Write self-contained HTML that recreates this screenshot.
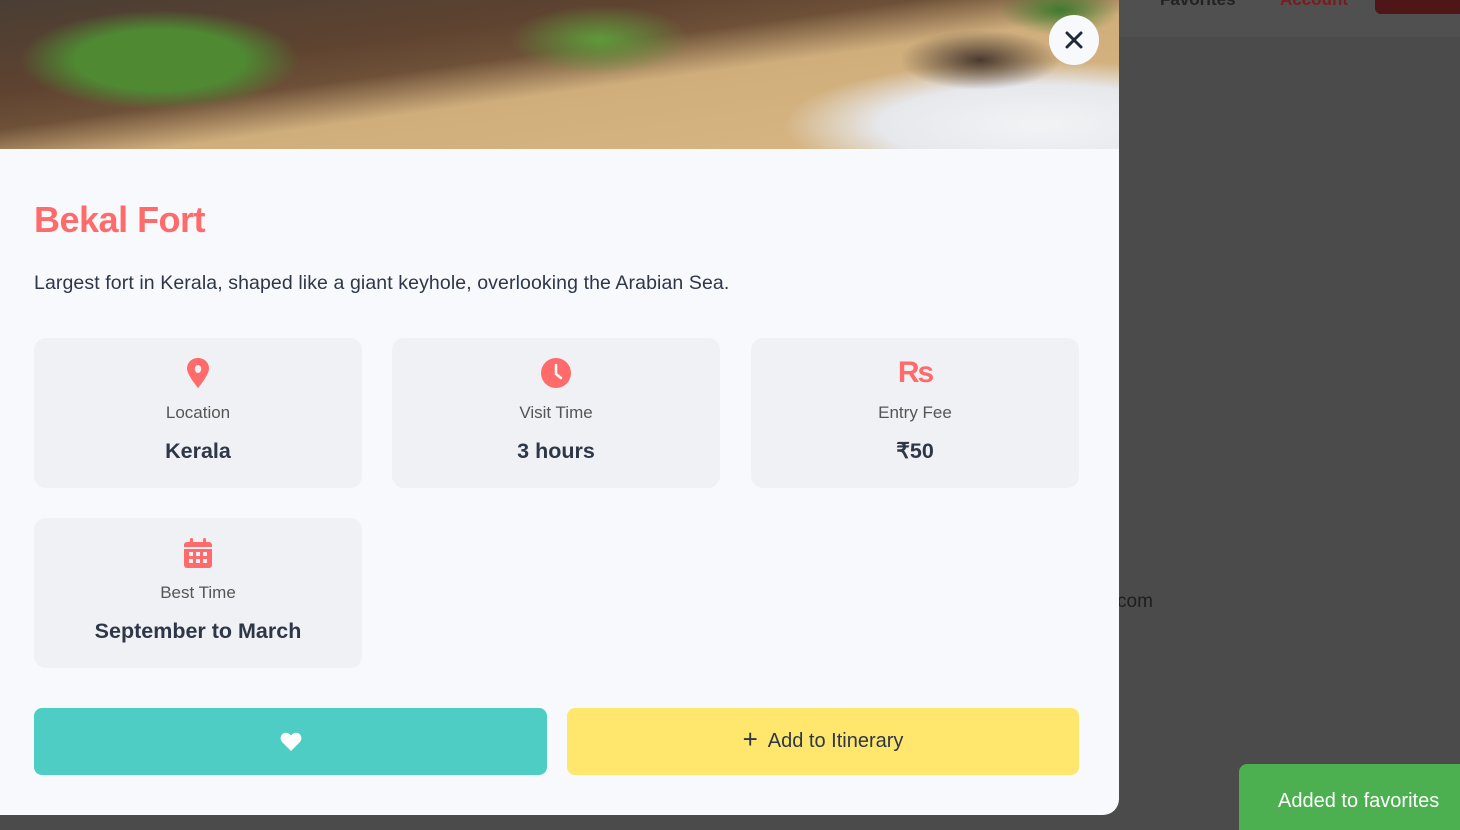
<!DOCTYPE html>
<html><head><meta charset="utf-8"><style>
*{margin:0;padding:0;box-sizing:border-box}
body{width:1460px;height:830px;overflow:hidden;background:#4b4b4b;font-family:"Liberation Sans",sans-serif;position:relative}
.hdr{position:absolute;left:0;top:0;width:1460px;height:37px;background:#505050}
.redbtn{position:absolute;left:1375px;top:-10px;width:100px;height:24px;background:#4e1616;border-radius:6px}
.hlink{position:absolute;top:-10px;font-size:17px;font-weight:bold}
.com{position:absolute;left:1117px;top:591px;font-size:19px;color:#1e1e1e}
.modal{position:absolute;left:0;top:0;width:1119px;height:815px;background:#f8f9fc;border-radius:0 0 16px 0;overflow:hidden}
.img{position:absolute;left:0;top:0;width:1119px;height:149px;
background:
radial-gradient(ellipse 140px 50px at 160px 60px,#4f8a33 0,#4f8a33 60%,transparent 100%),
radial-gradient(ellipse 90px 35px at 600px 40px,#5e9a3a 0,transparent 100%),
radial-gradient(ellipse 60px 25px at 1060px 10px,#3f7a2e 0,transparent 100%),
radial-gradient(ellipse 80px 30px at 980px 60px,#4a3a30 0,transparent 100%),
radial-gradient(ellipse 320px 80px at 1040px 125px,#f2f3f5 0,#e6e8ec 50%,transparent 80%),
linear-gradient(172deg,#4a3e34 0,#5e4330 30%,#6e5038 42%,#cfae7c 56%,#d9b885 100%)}
.close{position:absolute;left:1049px;top:15px;width:50px;height:50px;border-radius:50%;background:#f8f9fc;display:flex;align-items:center;justify-content:center}
h1{position:absolute;left:34px;top:199px;font-size:36px;color:#ff6b6b;font-weight:bold;letter-spacing:-0.5px}
.desc{position:absolute;left:34px;top:272px;font-size:19.5px;color:#2d3748;letter-spacing:0.1px}
.card{position:absolute;width:328px;height:150px;background:#f0f1f4;border-radius:12px;text-align:center}
.card svg{position:absolute;left:50%;transform:translateX(-50%)}
.lbl{position:absolute;left:0;right:0;top:65px;font-size:17px;color:#555}
.val{position:absolute;left:0;right:0;top:101px;font-size:21.5px;font-weight:bold;color:#2d3748}
.btn{position:absolute;top:708px;height:67px;border-radius:8px;display:flex;align-items:center;justify-content:center}
.toast{position:absolute;left:1239px;top:764px;width:221px;height:66px;background:#4caf50;border-radius:8px 0 0 0;color:#fff;font-size:20px;padding:26px 0 0 39px}
</style></head><body>
<div class="hdr"></div>
<div class="hlink" style="left:1160px;color:#222">Favorites</div>
<div class="hlink" style="left:1280px;color:#7a1c1c">Account</div>
<div class="redbtn"></div>
<div class="com">com</div>
<div class="modal">
<div class="img"></div>
<div class="close"><svg width="18" height="18" viewBox="0 0 18 18"><path d="M2 2L16 16M16 2L2 16" stroke="#1f2937" stroke-width="3" stroke-linecap="round"/></svg></div>
<h1>Bekal Fort</h1>
<div class="desc">Largest fort in Kerala, shaped like a giant keyhole, overlooking the Arabian Sea.</div>
<div class="card" style="left:34px;top:338px"><svg style="top:20px" width="24" height="30" viewBox="0 0 24 30"><path d="M12 0C5.5 0 1 4.8 1 10.5C1 17 12 30 12 30S23 17 23 10.5C23 4.8 18.5 0 12 0Z" fill="#ff6b6b"/><ellipse cx="12" cy="11" rx="3.2" ry="4" fill="#f0f1f4"/></svg><div class="lbl">Location</div><div class="val">Kerala</div></div>
<div class="card" style="left:392px;top:338px"><svg style="top:19px" width="32" height="32" viewBox="0 0 32 32"><circle cx="16" cy="16" r="15" fill="#ff6b6b"/><path d="M16 8V17L21 21" stroke="#fff" stroke-width="2.5" fill="none" stroke-linecap="round"/></svg><div class="lbl">Visit Time</div><div class="val">3 hours</div></div>
<div class="card" style="left:751px;top:338px"><div style="position:absolute;left:0;right:0;top:18px;font-size:30px;color:#ff6b6b;font-weight:bold;letter-spacing:-2px">Rs</div><div class="lbl">Entry Fee</div><div class="val">₹50</div></div>
<div class="card" style="left:34px;top:518px"><svg style="top:20px" width="28" height="30" viewBox="0 0 28 30"><rect x="0" y="4" width="28" height="26" rx="3" fill="#ff6b6b"/><rect x="6" y="0" width="3" height="7" rx="1.5" fill="#ff6b6b"/><rect x="19" y="0" width="3" height="7" rx="1.5" fill="#ff6b6b"/><rect x="0" y="9" width="28" height="2" fill="#f0f1f4"/><g fill="#f0f1f4"><rect x="5" y="14" width="4" height="4"/><rect x="12" y="14" width="4" height="4"/><rect x="19" y="14" width="4" height="4"/><rect x="5" y="21" width="4" height="4"/><rect x="12" y="21" width="4" height="4"/><rect x="19" y="21" width="4" height="4"/></g></svg><div class="lbl">Best Time</div><div class="val">September to March</div></div>
<div class="btn" style="left:34px;width:513px;background:#4ecdc4"><svg width="22" height="20" viewBox="0 0 22 20"><path d="M11 19L2.5 10.5C0 8 0 4 2.5 2C5 0 8.5 0.5 11 3.5C13.5 0.5 17 0 19.5 2C22 4 22 8 19.5 10.5Z" fill="#fff"/></svg></div>
<div class="btn" style="left:567px;width:512px;background:#ffe66d;font-size:20px;color:#2d3748"><span style="font-size:26px;margin-right:10px;margin-top:-4px">+</span>Add to Itinerary</div>
</div>
<div class="toast">Added to favorites</div>
</body></html>
